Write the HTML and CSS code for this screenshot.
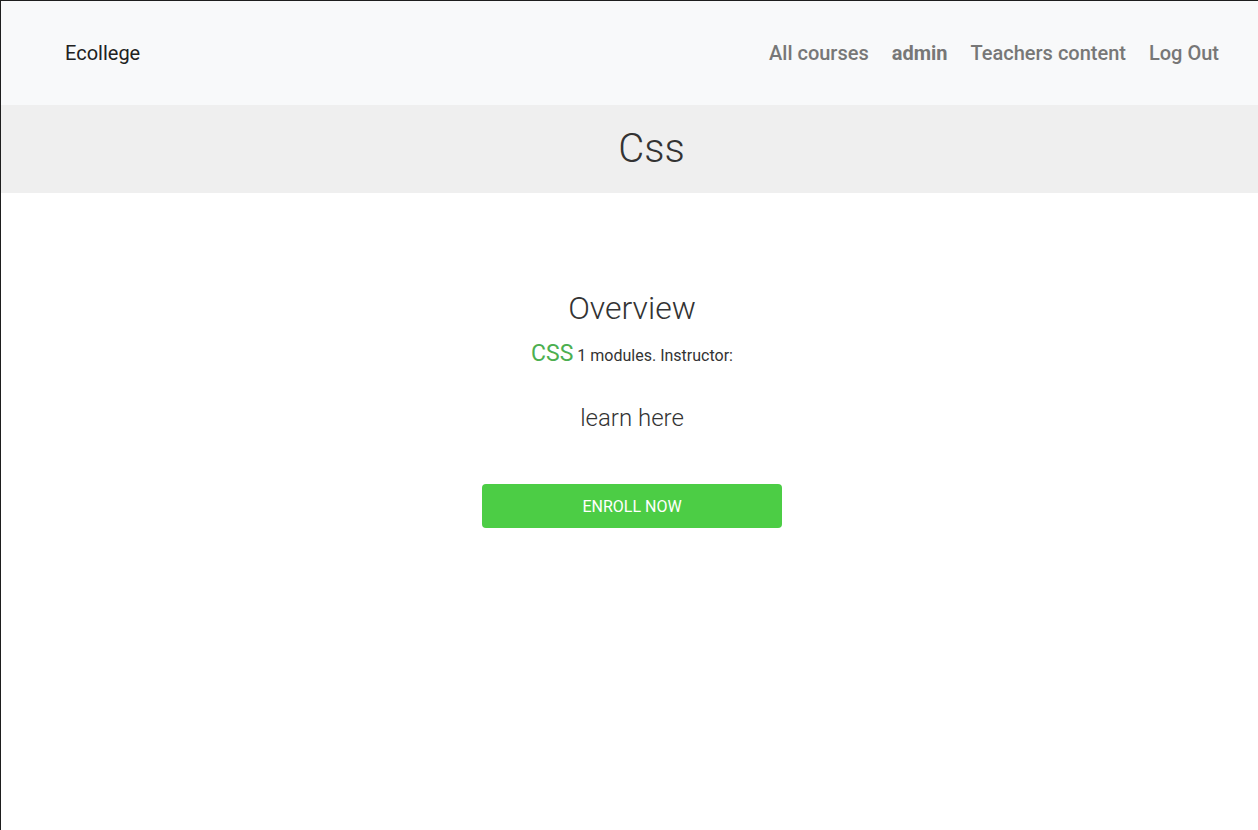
FILE: index.html
```html
<!DOCTYPE html>
<html lang="en">
<head>
<meta charset="utf-8">
<title>Css - Ecollege</title>
<link rel="stylesheet" href="styles.css">
</head>
<body>
<div class="frame">
  <header class="navbar">
    <a class="brand" href="#">Ecollege</a>
    <nav class="nav">
      <a class="nav-link" href="#">All courses</a>
      <a class="nav-link nav-user" href="#">admin</a>
      <a class="nav-link" href="#">Teachers content</a>
      <a class="nav-link" href="#">Log Out</a>
    </nav>
  </header>
  <section class="title-band">
    <h1 class="page-title">Css</h1>
  </section>
  <main class="overview">
    <h2 class="overview-title">Overview</h2>
    <p class="meta"><span class="course-code">CSS</span> 1 modules. Instructor:</p>
    <h4 class="description">learn here</h4>
    <a class="enroll" href="#">ENROLL NOW</a>
  </main>
</div>
</body>
</html>
```

FILE: styles.css
```css
* { box-sizing: border-box; }
html, body { margin: 0; padding: 0; height: 100%; }
body {
  font-family: Roboto, "Liberation Sans", Arial, sans-serif;
  background: #fff;
  color: #212529;
}
.frame {
  min-height: 100%;
  border-left: 1px solid #1e1e1e;
  border-top: 1px solid #1e1e1e;
}
a { text-decoration: none; }
.navbar {
  height: 104px;
  background: #f8f9fa;
  display: flex;
  align-items: center;
  justify-content: space-between;
  padding: 0 39px 0 64px;
}
.brand {
  font-size: 20px;
  color: #212121;
  line-height: 1;
}
.nav {
  display: flex;
  gap: 23px;
}
.nav-link {
  font-size: 20px;
  color: #777;
  font-weight: 500;
  line-height: 1;
}
.nav-user { font-weight: 700; }
.title-band {
  background: #efefef;
  height: 88px;
  display: flex;
  align-items: center;
  justify-content: center;
  padding-left: 44px;
}
.page-title {
  margin: 0;
  font-size: 40px;
  font-weight: 300;
  color: #333;
  line-height: 1;
}
.overview {
  display: flex;
  flex-direction: column;
  align-items: center;
  padding: 96px 0 0 5px;
}
.overview-title {
  margin: 0;
  font-size: 32px;
  font-weight: 300;
  color: #333;
  line-height: 1.2;
}
.meta {
  margin: 13px 0 0;
  font-size: 16px;
  color: #333;
  line-height: 1.2;
}
.course-code {
  color: #4caf50;
  font-size: 23px;
  font-weight: 400;
}
.description {
  margin: 36px 0 0;
  font-size: 24px;
  font-weight: 300;
  color: #333;
  line-height: 1.2;
}
.enroll {
  margin-top: 51px;
  width: 300px;
  height: 44px;
  padding-top: 2px;
  background: #4ccd45;
  color: #fff;
  border-radius: 4px;
  display: flex;
  align-items: center;
  justify-content: center;
  font-size: 16px;
}
```
